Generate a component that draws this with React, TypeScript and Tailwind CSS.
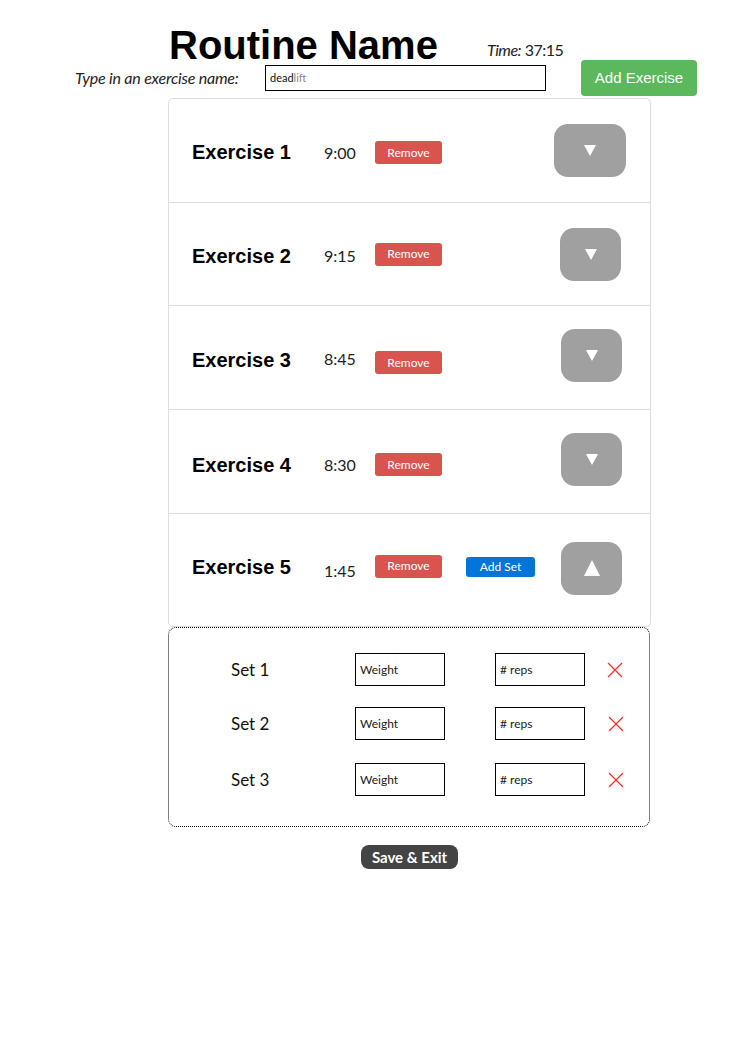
import React from 'react';

type Exercise = {
  name: string;
  time: string;
  height: number; // radhøyde
  arrowW: number; // bredde på pilknappen
  arrowRight: number; // avstand fra høyre kant
  off: [number, number, number, number]; // vertikal justering: navn, tid, remove, pil
  open?: boolean;
};

const exercises: Exercise[] = [
  { name: 'Exercise 1', time: '9:00', height: 103, arrowW: 72, arrowRight: 24, off: [1, 2, 2, 0] },
  { name: 'Exercise 2', time: '9:15', height: 103, arrowW: 61, arrowRight: 29, off: [2, 2, 0, 0] },
  { name: 'Exercise 3', time: '8:45', height: 104, arrowW: 61, arrowRight: 28, off: [2, 1, 5, -2] },
  { name: 'Exercise 4', time: '8:30', height: 104, arrowW: 61, arrowRight: 28, off: [3, 3, 3, -2] },
  { name: 'Exercise 5', time: '1:45', height: 113, arrowW: 61, arrowRight: 28, off: [-3, 1, -4, -2], open: true }
];

const sets = ['Set 1', 'Set 2', 'Set 3'];

const body = { fontFamily: 'Lato, "Open Sans", sans-serif' };
const arial = { fontFamily: '"Liberation Sans", Arial, sans-serif' };

// margin-top på et flex-barn med items-center flytter midten med halve verdien
const nudge = (px: number) => ({ marginTop: px * 2 });

const Arrow = ({ up }: { up?: boolean }) =>
  up ? (
    <svg width="16" height="16" viewBox="0 0 16 16">
      <polygon points="8,0 16,16 0,16" fill="#fff" />
    </svg>
  ) : (
    <svg width="12" height="11" viewBox="0 0 12 11">
      <polygon points="0,0 12,0 6,11" fill="#fff" />
    </svg>
  );

const Cross = () => (
  <svg width="16" height="16" viewBox="0 0 16 16">
    <path d="M1 1 L15 15 M15 1 L1 15" stroke="#ff2a2a" strokeWidth="1.2" fill="none" />
  </svg>
);

const App = () => {
  return (
    <div className="w-[752px] min-h-[1062px] bg-white text-black" style={body}>
      {/* Titel og tid */}
      <div className="flex items-end pt-[22px] pl-[169px] h-[68px]">
        <h1 className="text-[40px] leading-[46px] font-bold" style={arial}>
          Routine Name
        </h1>
        <div className="ml-[49px] mb-[8px] text-[16px] leading-[20px] tracking-[-0.5px] text-[#222]">
          <span className="italic">Time:</span> 37:15
        </div>
      </div>

      {/* Ny øvelse */}
      <div className="flex items-center -mt-[8px] h-[36px]">
        <span className="ml-[75px] w-[190px] italic text-[16px] tracking-[-0.2px] text-[#222]">
          Type in an exercise name:
        </span>
        <div className="w-[281px] h-[26px] border border-black flex items-center px-[4px] text-[11px]">
          <span className="text-[#111]">dead</span>
          <span className="text-[#888]">lift</span>
        </div>
        <button
          className="ml-[35px] w-[116px] h-[36px] rounded-[4px] bg-[#5cb85c] text-white text-[15px]"
          style={arial}
        >
          Add Exercise
        </button>
      </div>

      <div className="ml-[168px] w-[483px] mt-[2px]">
        {/* Øvelsesliste */}
        <div className="border border-[#dddddd] rounded-[5px]">
          {exercises.map((ex, i) => (
            <div
              key={ex.name}
              className={`flex items-center pl-[23px] ${i > 0 ? 'border-t border-[#dddddd]' : ''}`}
              style={{ height: ex.height }}
            >
              <span className="w-[132px] text-[20px] font-bold" style={{ ...arial, ...nudge(ex.off[0]) }}>
                {ex.name}
              </span>
              <span className="w-[51px] text-[16px] text-[#222]" style={nudge(ex.off[1])}>
                {ex.time}
              </span>
              <button
                className="w-[67px] h-[23px] rounded-[3px] bg-[#d9534f] text-white text-[12px]"
                style={nudge(ex.off[2])}
              >
                Remove
              </button>
              {ex.open && (
                <button
                  className="ml-[24px] w-[69px] h-[20px] rounded-[3px] bg-[#0275d8] text-white text-[12px]"
                  style={nudge(-3)}
                >
                  Add Set
                </button>
              )}
              <div className="flex-1" />
              <button
                className="h-[53px] rounded-[14px] bg-[#a0a0a0] flex items-center justify-center"
                style={{ width: ex.arrowW, marginRight: ex.arrowRight, ...nudge(ex.off[3]) }}
              >
                <Arrow up={ex.open} />
              </button>
            </div>
          ))}
        </div>

        {/* Sett for åpen øvelse */}
        <div className="w-[482px] border border-dotted border-black rounded-[8px] pt-[25px] pb-[30px] flex flex-col">
          {sets.map((s, i) => (
            <div
              key={s}
              className={`flex items-center h-[33px] ${i === 1 ? 'mt-[21px]' : ''} ${i === 2 ? 'mt-[23px]' : ''}`}
            >
              <span className="ml-[62px] w-[124px] text-[17px] text-[#111]">{s}</span>
              <div className="w-[90px] h-[33px] border border-black flex items-center pl-[4px] text-[12px] text-[#222]">
                Weight
              </div>
              <div className="ml-[50px] w-[90px] h-[33px] border border-black flex items-center pl-[4px] text-[12px] text-[#222]">
                # reps
              </div>
              <div className={`flex items-center ${i === 0 ? 'ml-[22px]' : 'ml-[23px]'}`}>
                <Cross />
              </div>
            </div>
          ))}
        </div>

        <div className="flex justify-center mt-[18px]">
          <button className="h-[24px] px-[11px] rounded-[8px] bg-[#444] text-white text-[15px] font-bold">
            Save &amp; Exit
          </button>
        </div>
      </div>
    </div>
  );
};

export default App;
